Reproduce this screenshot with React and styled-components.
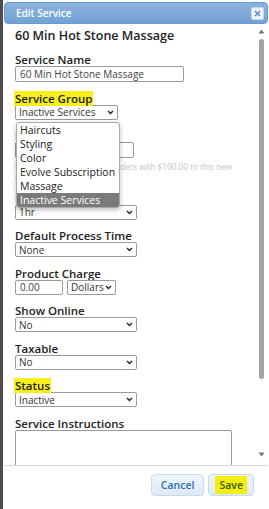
import React from "react"
import styled, { createGlobalStyle } from "styled-components"

const GlobalStyle = createGlobalStyle`
  html, body {
    margin: 0;
    padding: 0;
    background: #4d4d4d;
    font-family: "Open Sans", "Liberation Sans", sans-serif;
  }
`

const Dialog = styled.div`
  margin-left: 3px;
  width: 266px;
  height: 509px;
  background: #fff;
  box-sizing: border-box;
  padding: 2px 1px 0 1px;
  display: flex;
  flex-direction: column;
  overflow: hidden;
`

const Header = styled.div`
  height: 22px;
  flex: none;
  border-radius: 4px;
  background: linear-gradient(#8cb3dc, #72a2d4);
  border: 1px solid #6b9ad0;
  box-sizing: border-box;
  display: flex;
  align-items: center;
  justify-content: space-between;
  padding: 0 3px 0 11px;
`

const HeaderTitle = styled.span`
  color: #fff;
  font-size: 10px;
  font-weight: 600;
`

const CloseButton = styled.div`
  width: 13px;
  height: 13px;
  border-radius: 2px;
  background: #eef3fa;
  border: 1px solid #c6d8ee;
  box-sizing: border-box;
  display: flex;
  align-items: center;
  justify-content: center;
`

const Body = styled.div`
  flex: none;
  height: 441px;
  display: flex;
  overflow: hidden;
`

const Content = styled.div`
  flex: 1;
  padding: 4px 0 0 11px;
  position: relative;
`

const Title = styled.h1`
  margin: 0 0 9px 0;
  font-size: 12.5px;
  line-height: 16px;
  font-weight: 600;
  color: #222;
`

const Field = styled.div`
  position: relative;
  margin-bottom: 9.5px;
`

const Label = styled.div`
  font-size: 11.5px;
  line-height: 13px;
  font-weight: 600;
  color: #222;
`

const Highlight = styled.span`
  background: #f7ee1c;
  padding: 0 1px;
  margin-left: -1px;
`

const TextInput = styled.input`
  display: block;
  width: ${(p) => p.$w}px;
  height: ${(p) => p.$h || 15}px;
  box-sizing: border-box;
  border: 1px solid #9a9a9a;
  border-radius: 2px;
  padding: 0 4px;
  font-family: inherit;
  font-size: 10px;
  color: #444;
  outline: none;
`

const InlineRow = styled.div`
  display: flex;
  gap: 4px;
`

const SelectBox = styled.div`
  width: ${(p) => p.$w}px;
  height: 15px;
  box-sizing: border-box;
  border: 1px solid #9a9a9a;
  border-radius: 2px;
  padding: 0 3px 0 3px;
  display: flex;
  align-items: center;
  justify-content: space-between;
  font-size: 10px;
  color: #333;
  background: #fff;
  white-space: nowrap;
`

const Note = styled.div`
  margin-top: 4px;
  font-size: 8.2px;
  line-height: 10px;
  color: #c4c4c4;
  white-space: nowrap;
`

const DropList = styled.div`
  position: absolute;
  left: 1px;
  top: 30px;
  width: 102px;
  border: 1px solid #a8a8a8;
  border-radius: 3px;
  background: #fff;
  box-shadow: 0 2px 5px rgba(0, 0, 0, 0.25);
  overflow: hidden;
  z-index: 2;
`

const DropItem = styled.div`
  height: 14px;
  line-height: 14px;
  padding: 0 3px;
  font-size: 10.5px;
  white-space: nowrap;
  color: ${(p) => (p.$active ? "#fff" : "#222")};
  background: ${(p) => (p.$active ? "#7a7a7a" : "transparent")};
`

const TextArea = styled.div`
  width: 217px;
  height: 50px;
  border: 1px solid #9a9a9a;
  border-radius: 2px;
  box-sizing: border-box;
`

const Scrollbar = styled.div`
  flex: none;
  width: 10px;
  margin-right: 2px;
  display: flex;
  flex-direction: column;
  align-items: center;
  padding-top: 5px;
`

const Thumb = styled.div`
  width: 5px;
  height: 340px;
  margin-top: 5px;
  border-radius: 3px;
  background: #a3a3a3;
`

const Footer = styled.div`
  flex: 1;
  border-top: 1px solid #c9dcef;
  display: flex;
  justify-content: flex-end;
  align-items: flex-start;
  gap: 4px;
  padding: 8px 14px 0 0;
`

const Button = styled.div`
  height: 22px;
  box-sizing: border-box;
  padding: 0 ${(p) => p.$pad}px;
  border: 1px solid #c7daef;
  border-radius: 4px;
  background: linear-gradient(#edf4fc, #dfeaf7);
  display: flex;
  align-items: center;
  font-size: 10.5px;
  font-weight: 600;
  color: #2f6cb0;
`

const SaveText = styled.span`
  background: #f2ee10;
  color: #3b5a08;
  padding: 2px 4px;
`

const Chevron = () => (
  <svg width="7" height="5" viewBox="0 0 7 5">
    <path d="M1 1 L3.5 3.5 L6 1" fill="none" stroke="#222" strokeWidth="1.4" />
  </svg>
)

const Select = ({ w, value }) => (
  <SelectBox $w={w}>
    <span>{value}</span>
    <Chevron />
  </SelectBox>
)

const groups = ["Haircuts", "Styling", "Color", "Evolve Subscription", "Massage", "Inactive Services"]

const App = () => (
  <>
    <GlobalStyle />
    <Dialog>
      <Header>
        <HeaderTitle>Edit Service</HeaderTitle>
        <CloseButton>
          <svg width="7" height="7" viewBox="0 0 7 7">
            <path d="M1 1 L6 6 M6 1 L1 6" stroke="#5a8cc8" strokeWidth="1.6" />
          </svg>
        </CloseButton>
      </Header>
      <Body>
        <Content>
          <Title>60 Min Hot Stone Massage</Title>
          <Field>
            <Label>Service Name</Label>
            <TextInput $w={169} $h={16} defaultValue="60 Min Hot Stone Massage" />
          </Field>
          <Field>
            <Label><Highlight>Service Group</Highlight></Label>
            <Select w={103} value="Inactive Services" />
            <DropList>
              {groups.map((g) => (
                <DropItem key={g} $active={g === "Inactive Services"}>{g}</DropItem>
              ))}
            </DropList>
          </Field>
          <Field>
            <Label>Price</Label>
            <TextInput $w={119} $h={16} defaultValue="100.00" />
            <Note>
              Update all of the existing orders with $100.00 to this new
              <br />
              price.
            </Note>
          </Field>
          <Field>
            <Label>Duration</Label>
            <Select w={122} value="1hr" />
          </Field>
          <Field>
            <Label>Default Process Time</Label>
            <Select w={122} value="None" />
          </Field>
          <Field>
            <Label>Product Charge</Label>
            <InlineRow>
              <TextInput $w={48} defaultValue="0.00" />
              <Select w={49} value="Dollars" />
            </InlineRow>
          </Field>
          <Field>
            <Label>Show Online</Label>
            <Select w={122} value="No" />
          </Field>
          <Field>
            <Label>Taxable</Label>
            <Select w={122} value="No" />
          </Field>
          <Field>
            <Label><Highlight>Status</Highlight></Label>
            <Select w={122} value="Inactive" />
          </Field>
          <Field>
            <Label>Service Instructions</Label>
            <TextArea />
          </Field>
        </Content>
        <Scrollbar>
          <svg width="7" height="5" viewBox="0 0 7 5">
            <path d="M3.5 0.5 L6.5 4.5 L0.5 4.5 Z" fill="#777" />
          </svg>
          <Thumb />
          <div style={{ flex: 1 }} />
          <svg width="7" height="5" viewBox="0 0 7 5" style={{ marginBottom: 8 }}>
            <path d="M0.5 0.5 L6.5 0.5 L3.5 4.5 Z" fill="#777" />
          </svg>
        </Scrollbar>
      </Body>
      <Footer>
        <Button $pad={9}>Cancel</Button>
        <Button $pad={6}><SaveText>Save</SaveText></Button>
      </Footer>
    </Dialog>
  </>
)

export default App
